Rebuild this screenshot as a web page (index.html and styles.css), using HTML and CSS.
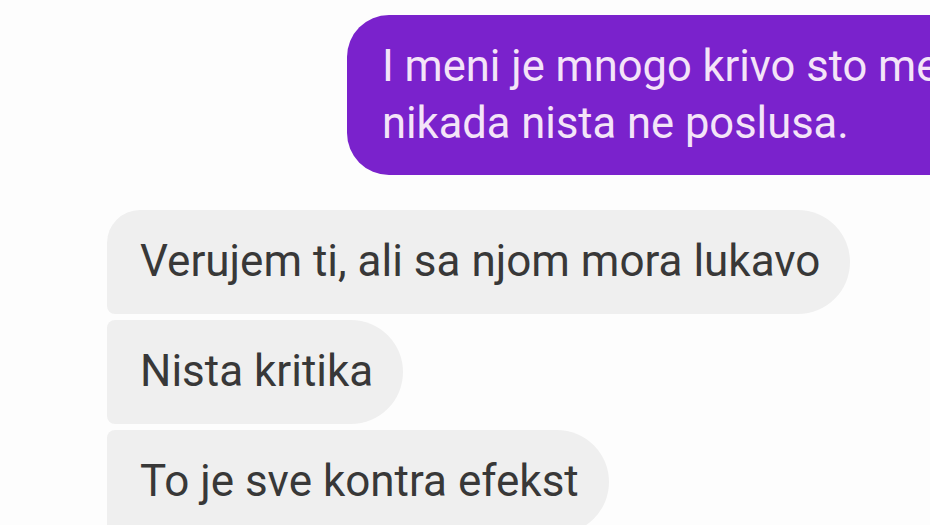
FILE: index.html
```html
<!DOCTYPE html>
<html>
<head>
<meta charset="utf-8">
<link rel="stylesheet" href="styles.css">
</head>
<body>
<div class="chat">
  <div class="row out">
    <div class="bubble sent">I meni je mnogo krivo sto me<br>nikada nista ne poslusa.</div>
  </div>
  <div class="group">
    <div class="bubble recv first">Verujem ti, ali sa njom mora lukavo</div>
    <div class="bubble recv mid">Nista kritika</div>
    <div class="bubble recv last">To je sve kontra efekst</div>
  </div>
</div>
</body>
</html>
```
FILE: styles.css
```css
html, body {
  margin: 0;
  padding: 0;
  background: #fdfdfd;
}
.chat {
  width: 930px;
  height: 525px;
  overflow: hidden;
  display: flex;
  flex-direction: column;
  font-family: Roboto, "Noto Sans", sans-serif;
  font-size: 44px;
  line-height: 57px;
}
.row.out {
  display: flex;
  padding: 15px 0 0 347px;
}
.bubble {
  white-space: nowrap;
}
.sent {
  background: #7a22cc;
  color: #f4e4f8;
  padding: 23px 60px 23px 35px;
  border-radius: 42px;
  width: 640px;
  flex: none;
  font-size: 43.5px;
}
.group {
  display: flex;
  flex-direction: column;
  align-items: flex-start;
  gap: 6px;
  padding: 35px 0 0 107px;
}
.recv {
  background: #efefef;
  color: #383838;
  padding: 23px 30px 24px 33px;
  border-radius: 8px 52px 52px 8px;
}
.recv.first {
  border-top-left-radius: 33px;
}
```
